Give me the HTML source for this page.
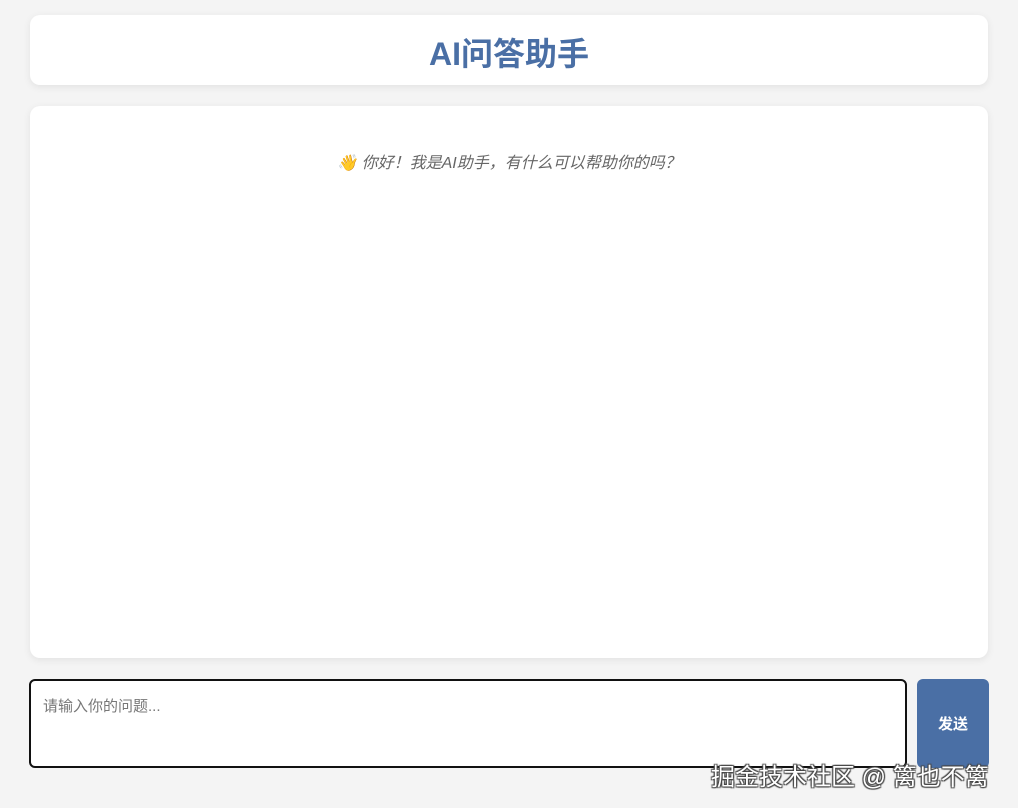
<!DOCTYPE html>
<html><head><meta charset="utf-8"><style>
body{margin:0;width:1018px;height:808px;background:#f4f4f4;font-family:"Liberation Sans","Noto Sans CJK SC",sans-serif;position:relative;overflow:hidden}
.card{position:absolute;left:30px;width:958px;background:#fff;border-radius:10px;box-shadow:0 2px 8px rgba(0,0,0,.08)}
.h{top:15px;height:70px;text-align:center;line-height:78px;font-size:32px;font-weight:bold;color:#4a6fa5}
.m{top:106px;height:552px}
.greet{position:absolute;top:43px;left:0;right:0;text-align:center;font-size:16px;font-style:italic;color:#666}
.inp{position:absolute;left:29px;top:679px;width:874px;height:85px;border:2px solid #111;border-radius:6px;background:#fff;box-sizing:content-box}
.ph{position:absolute;left:12px;top:14px;font-size:15px;color:#777}
.btn{position:absolute;left:917px;top:679px;width:72px;height:89px;background:#4a6fa5;border-radius:6px;color:#fff;font-size:15px;font-weight:bold;text-align:center;line-height:91px}
.wm{position:absolute;left:711px;top:757px;font-size:24px;color:#fff;text-shadow:1px 1px 1px #444,-1px -1px 1px #444,1px -1px 1px #444,-1px 1px 1px #444;letter-spacing:0}
</style></head><body>
<div class="card h">AI问答助手</div>
<div class="card m"><div class="greet">👋 你好！我是AI助手，有什么可以帮助你的吗？</div></div>
<div class="inp"><div class="ph">请输入你的问题...</div></div>
<div class="btn">发送</div>
<div class="wm">掘金技术社区 @ 篱也不篱</div>
</body></html>
